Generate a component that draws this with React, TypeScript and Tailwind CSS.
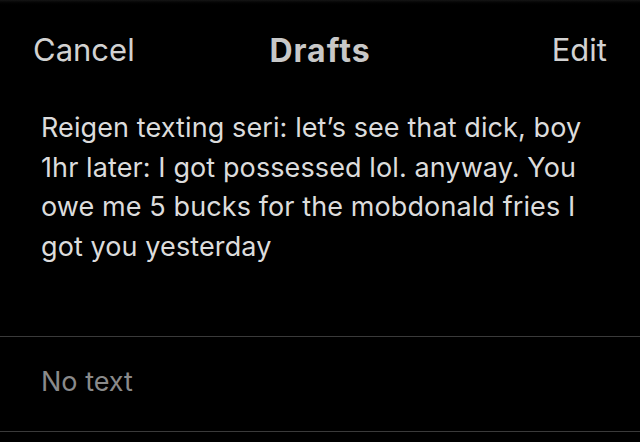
export default function App() {
  return (
    <div className="w-[640px] h-[442px] bg-black overflow-hidden font-['Inter',sans-serif]">
      <div className="h-[6px] bg-gradient-to-b from-[#151515] to-black" />
      <header className="h-[88px] px-[33px] grid grid-cols-3 items-center text-[#d2d2d2] text-[31px] -mt-[6px] pt-[13px]">
        <span className="justify-self-start">Cancel</span>
        <span className="justify-self-center font-bold text-[32px] tracking-[1px] text-[#c8c8c8]">Drafts</span>
        <span className="justify-self-end">Edit</span>
      </header>
      <div className="h-[248px] px-[41px] pt-[20px] text-[#dcdcdc] text-[27px] leading-[39.5px] tracking-[0.1px] whitespace-nowrap">
        Reigen texting seri: let’s see that dick, boy<br />
        1hr later: I got possessed lol. anyway. You<br />
        owe me 5 bucks for the mobdonald fries I<br />
        got you yesterday
      </div>
      <div className="h-px bg-[#3a3a3a]" />
      <div className="h-[94px] px-[41px] pb-[4px] flex items-center text-[#8a8a8a] text-[27px]">
        No text
      </div>
      <div className="h-px bg-[#3a3a3a]" />
    </div>
  );
}
